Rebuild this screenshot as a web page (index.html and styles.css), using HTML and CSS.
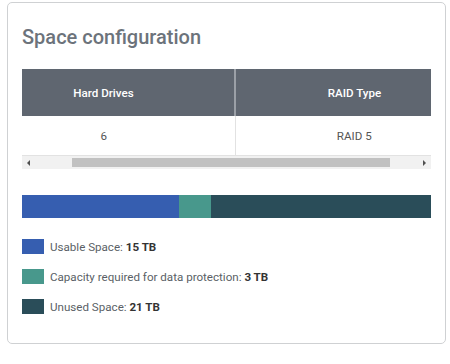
FILE: index.html
```html
<!DOCTYPE html>
<html>
  <head>
    <link rel="stylesheet" href="styles.css">
  </head>

  <body>
    <div class="card">
      <h2 class="card-title">Space configuration</h2>

      <div class="table-wrap">
        <table class="table">
          <thead>
            <tr>
              <th class="col-drives">Hard Drives</th>
              <th class="col-raid">RAID Type</th>
            </tr>
          </thead>
          <tbody>
            <tr>
              <td class="col-drives">6</td>
              <td class="col-raid">RAID 5</td>
            </tr>
          </tbody>
        </table>
      </div>

      <div class="scrollbar">
        <span class="arrow arrow-left"></span>
        <div class="track"><div class="thumb"></div></div>
        <span class="arrow arrow-right"></span>
      </div>

      <div class="space-bar">
        <div class="seg seg-usable" style="width: 38.46%"></div>
        <div class="seg seg-protect" style="width: 7.69%"></div>
        <div class="seg seg-unused" style="width: 53.85%"></div>
      </div>

      <ul class="legend">
        <li><span class="swatch seg-usable"></span>Usable Space:&nbsp;<b>15 TB</b></li>
        <li><span class="swatch seg-protect"></span>Capacity required for data protection:&nbsp;<b>3 TB</b></li>
        <li><span class="swatch seg-unused"></span>Unused Space:&nbsp;<b>21 TB</b></li>
      </ul>
    </div>
  </body>
</html>
```

FILE: styles.css
```css
body {
  font-family: Roboto, "Liberation Sans", sans-serif;
  background-color: #fff;
  margin: 0;
  padding: 2px 0 0 7px;
}

.card {
  width: 409px;
  padding: 22px 14px 29px 14px;
  border: 1px solid #cfd1d3;
  border-radius: 5px;
}

.card-title {
  margin: 0 0 20px 0;
  font-size: 20px;
  line-height: 24px;
  font-weight: 500;
  color: #6c737b;
}

.table-wrap {
  width: 409px;
  overflow: hidden;
}

.table {
  width: 450px;
  table-layout: fixed;
  border-collapse: collapse;
  font-size: 11.6px;
}

.table th,
.table td {
  padding: 0;
  text-align: center;
}

.table th {
  height: 47px;
  background-color: #5f6670;
  color: #fff;
  font-weight: 500;
}

.table td {
  height: 39px;
  color: #555;
  border-bottom: 1px solid #e2e2e2;
}

.col-drives {
  width: 163px;
  padding-right: 49px !important;
}

.col-raid {
  width: 237px;
}

.table th.col-raid {
  border-left: 2px solid #9ba0a7;
}

.table td.col-raid {
  border-left: 1px solid #e2e2e2;
}

.scrollbar {
  display: flex;
  align-items: center;
  height: 13px;
  background-color: #f1f1f1;
}

.arrow {
  width: 0;
  height: 0;
  border-top: 3px solid transparent;
  border-bottom: 3px solid transparent;
}

.arrow-left {
  margin: 0 0 0 5px;
  border-right: 3px solid #505050;
}

.arrow-right {
  margin: 0 5px 0 0;
  border-left: 3px solid #505050;
}

.track {
  flex: 1;
  height: 9px;
  padding: 0 0 0 39px;
  margin: 0 33px 0 3px;
}

.thumb {
  height: 9px;
  background-color: #c1c1c1;
}

.space-bar {
  display: flex;
  height: 23px;
  margin-top: 26px;
}

.seg-usable {
  background-color: #365eb0;
}

.seg-protect {
  background-color: #48988c;
}

.seg-unused {
  background-color: #2a4d59;
}

.legend {
  list-style: none;
  margin: 21px 0 0 0;
  padding: 0;
  font-size: 11.6px;
  color: #5a5f66;
}

.legend li {
  display: flex;
  align-items: center;
  height: 15px;
  margin-bottom: 15px;
}

.legend li:last-child {
  margin-bottom: 0;
}

.legend b {
  color: #333;
  font-weight: 700;
}

.swatch {
  width: 22px;
  height: 15px;
  margin-right: 6px;
}
```
